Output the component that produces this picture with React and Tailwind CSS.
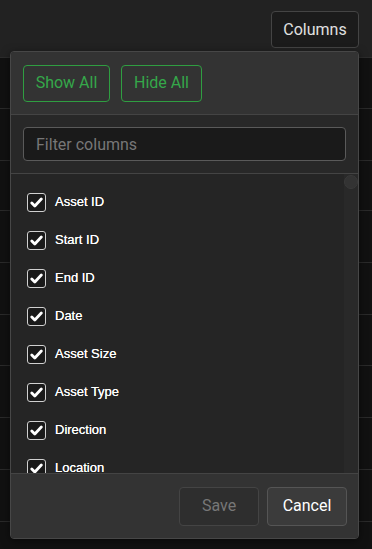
import React from "react";

const items = ["Asset ID", "Start ID", "End ID", "Date", "Asset Size", "Asset Type", "Direction", "Location"];

function Check() {
  return (
    <span className="flex h-[19px] w-[19px] shrink-0 items-center justify-center rounded-[3px] border border-[#d0d0d0] bg-[#1a1a1a]">
      <svg width="13" height="11" viewBox="0 0 13 11">
        <path d="M1.8 6 L4.8 9 L11.3 2" fill="none" stroke="#fff" strokeWidth="2.8" strokeLinecap="round" strokeLinejoin="round" />
      </svg>
    </span>
  );
}

export default function App() {
  const rows = [42, 51, 52, 50, 52, 52, 51, 52, 52, 52];
  return (
    <div className="relative h-[549px] w-[372px] overflow-hidden bg-[#111111]" style={{ fontFamily: "Roboto, 'Liberation Sans', sans-serif" }}>
      <div className="flex h-[58px] items-start justify-end border-b border-[#2c2c2c] bg-[#222222] pr-[13px] pt-[11px]">
        <button className="h-[37px] w-[88px] rounded-[4px] border border-[#444] bg-[#1b1b1b] text-[16px] text-[#e0e0e0]">Columns</button>
      </div>
      <div className="flex flex-col">
        {rows.slice(1).map((h, i) => (
          <div key={i} className="border-b border-[#2a2a2a]" style={{ height: h }} />
        ))}
      </div>
      <div className="absolute left-[10px] top-[51px] flex h-[488px] w-[349px] flex-col overflow-hidden rounded-[4px] border border-[#474747] bg-[#252525] shadow-[0_2px_8px_rgba(0,0,0,0.5)]">
        <div className="flex h-[63px] shrink-0 items-center gap-[11px] border-b border-[#444] bg-[#333333] px-[12px]">
          <button className="h-[37px] w-[87px] rounded-[4px] border border-[#2f9e41] text-[16px] text-[#35a84a]">Show All</button>
          <button className="h-[37px] w-[81px] rounded-[4px] border border-[#2f9e41] text-[16px] text-[#35a84a]">Hide All</button>
        </div>
        <div className="flex h-[59px] shrink-0 items-center border-b border-[#444] bg-[#282828] px-[12px]">
          <input
            placeholder="Filter columns"
            className="h-[34px] w-full rounded-[4px] border border-[#5a5a5a] bg-[#1a1a1a] px-[12px] text-[16px] text-[#ddd] outline-none placeholder:text-[#777]"
          />
        </div>
        <div className="relative flex min-h-0 flex-1">
          <div className="flex flex-1 flex-col overflow-hidden pt-[9px]" style={{ fontFamily: "'Liberation Sans', Arial, sans-serif" }}>
            {items.map((t) => (
              <div key={t} className="flex h-[38px] shrink-0 items-center gap-[9px] pl-[16px]">
                <Check />
                <span className="text-[13px] font-medium text-white [text-shadow:0_0_0.3px_#fff]">{t}</span>
              </div>
            ))}
          </div>
          <div className="w-[14px] shrink-0 bg-[#292929]">
            <div className="mt-[1px] h-[14px] w-[14px] rounded-full border border-[#3a3a3a] bg-[#333]" />
          </div>
        </div>
        <div className="flex h-[65px] shrink-0 items-center justify-end gap-[8px] border-t border-[#444] bg-[#333333] px-[11px]">
          <button className="h-[39px] w-[80px] rounded-[4px] border border-[#444] bg-[#2e2e2e] text-[16px] text-[#777]">Save</button>
          <button className="h-[39px] w-[80px] rounded-[4px] border border-[#555] bg-[#3b3b3b] text-[16px] text-white">Cancel</button>
        </div>
      </div>
    </div>
  );
}
